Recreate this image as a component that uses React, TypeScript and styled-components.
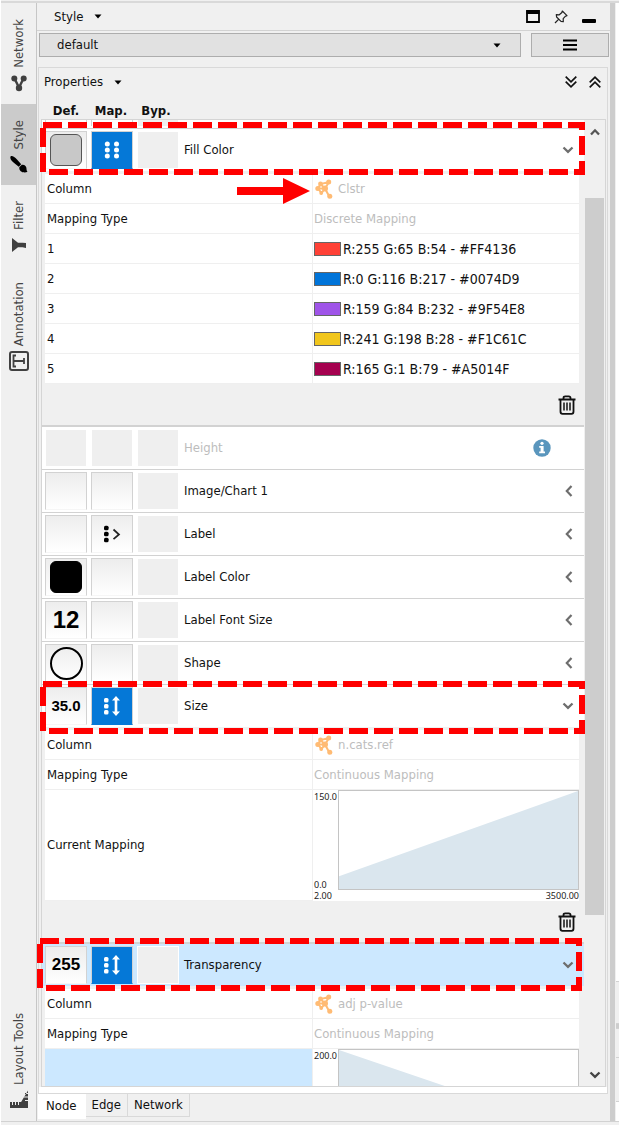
import React from "react";
import styled, { createGlobalStyle, css } from "styled-components";

const FONT = '"DejaVu Sans Condensed", Tahoma, "Noto Sans", sans-serif';
const NUM_FONT = '"Liberation Sans", Arial, sans-serif';
const BG = "#f0f0f0";
const LINE = "#d2d2d2";
const BLUE = "#0578d7";
const PALE = "#cce8ff";

const GlobalStyle = createGlobalStyle`
  * { box-sizing: border-box; }
  body { margin: 0; background: ${BG}; color: #111; font: 13px/16px ${FONT}; }
  button, select { font: inherit; color: inherit; margin: 0; padding: 0; }
  svg { display: block; flex: none; }
`;

/* ---------- frame ---------- */

const Page = styled.div`
  height: 100vh;
  display: flex;
  flex-direction: column;
  padding: 1px 0 3px;
  border-left: 1px solid #fff;
`;

const Frame = styled.div`
  flex: 1;
  min-height: 0;
  display: flex;
  border-top: 2px solid #d9d9d9;
  border-bottom: 1px solid ${LINE};
`;

const Strip = styled.nav`
  width: 36px;
  display: flex;
  flex-direction: column;
  border-right: 1px solid #c6c6c6;
`;

const StripTab = styled.button<{ $active?: boolean; $last?: boolean }>`
  display: flex;
  flex-direction: column;
  align-items: center;
  gap: 5px;
  padding: 16px 0 11px;
  border: 0;
  background: ${(p) => (p.$active ? "#cbcbcb" : "transparent")};
  color: #444;
  ${(p) => p.$last && css`margin-top: auto;`}
`;

const StripLabel = styled.span`
  writing-mode: vertical-rl;
  transform: rotate(180deg);
`;

const Main = styled.main`
  flex: 1;
  min-width: 0;
  display: flex;
  flex-direction: column;
`;

const TitleBar = styled.header`
  height: 28px;
  display: flex;
  align-items: center;
  justify-content: space-between;
  padding: 0 14px 0 17px;
  border-bottom: 1px solid ${LINE};
`;

const MenuButton = styled.button`
  display: flex;
  align-items: center;
  gap: 11px;
  border: 0;
  background: none;
`;

const IconGroup = styled.div<{ $gap: number }>`
  display: flex;
  align-items: center;
  gap: ${(p) => p.$gap}px;
`;

const IconButton = styled.button`
  display: flex;
  align-items: center;
  justify-content: center;
  border: 0;
  background: none;
`;

const StyleBar = styled.div`
  display: flex;
  gap: 10px;
  padding: 2px 1px 0 2px;
`;

const SelectBox = styled.label`
  position: relative;
  flex: 1;
  display: flex;

  svg {
    position: absolute;
    right: 20px;
    top: 10px;
    pointer-events: none;
  }
`;

const Select = styled.select`
  appearance: none;
  width: 100%;
  height: 24px;
  padding: 0 17px;
  border: 1px solid #adadad;
  border-radius: 0;
  background: #e1e1e1;
`;

const OptionsButton = styled(IconButton)`
  width: 78px;
  height: 24px;
  border: 1px solid #adadad;
  background: #e1e1e1;
`;

const Panel = styled.section`
  flex: 1;
  min-height: 0;
  display: flex;
  flex-direction: column;
  margin: 10px 2px 0 1px;
  border: 1px solid #d9d9d9;
`;

const PanelBar = styled.div`
  height: 28px;
  display: flex;
  align-items: center;
  justify-content: space-between;
  padding: 0 6px 0 5px;
`;

const Headings = styled.div`
  height: 23px;
  display: flex;
  align-items: center;
  gap: 3px;
  padding: 7px 0 0 6px;
  font-weight: bold;

  span { width: 42px; text-align: center; }
`;

const ListFrame = styled.div`
  flex: 1;
  min-height: 0;
  display: flex;
  margin: 0 1px 0 2px;
  border: 1px solid #d5d5d5;
`;

const List = styled.div`
  flex: 1;
  min-width: 0;
  padding-right: 1px;
  overflow-x: visible;
  overflow-y: clip;
`;

const ScrollBar = styled.div`
  width: 20px;
  display: flex;
  flex-direction: column;
  padding-right: 1px;
`;

const ScrollTrack = styled.div`
  flex: 1;
  display: grid;
  grid-template-rows: 55fr 717fr 148fr;
`;

const ScrollThumb = styled.div`
  grid-row: 2;
  background: #cdcdcd;
`;

const ScrollButton = styled(IconButton)`
  height: 23px;
`;

const PanelFoot = styled.div`
  height: 6px;
  background: #fff;
`;

const BottomTabs = styled.div`
  height: 27px;
  display: flex;
  align-items: flex-start;
  margin-left: 1px;
`;

const BottomTab = styled.button<{ $active?: boolean }>`
  height: ${(p) => (p.$active ? 25 : 23)}px;
  padding: 0 ${(p) => (p.$active ? 8 : 6)}px;
  border: 1px solid ${(p) => (p.$active ? "#fff" : "#d9d9d9")};
  border-top: 0;
  border-left: 0;
  background: ${(p) => (p.$active ? "#fff" : BG)};
`;

const Gutter = styled.div`
  width: 5px;
  background: #cdcdcd;
`;

const Neighbour = styled.div`
  width: 4px;
  display: flex;
  flex-direction: column;
  background: #fff;
  border-left: 1px solid ${BG};
`;

const NeighbourBar = styled.div<{ $h: number; $bg: string }>`
  height: ${(p) => p.$h}px;
  background: ${(p) => p.$bg};
  border-top: 1px solid ${LINE};
`;

const NeighbourFill = styled.div`
  flex: 1;
`;

/* ---------- property rows ---------- */

const Row = styled.div<{ $selected?: boolean; $thick?: boolean }>`
  position: relative;
  display: flex;
  align-items: center;
  gap: 4px;
  height: ${(p) => (p.$thick ? 44 : 43)}px;
  padding: 0 10px 0 3px;
  border-top: ${(p) => (p.$thick ? 2 : 1)}px solid ${LINE};
  background: ${(p) => (p.$selected ? PALE : "#fff")};
`;

const RowTail = styled.div`
  height: 8px;
  display: flex;
  gap: 4px;
  padding: 0 3px 2px;
  background: #fff;
`;

const cell = css`
  width: 42px;
  height: 38px;
  display: flex;
  align-items: center;
  justify-content: center;
`;

const ValueButton = styled.button<{ $size?: number }>`
  ${cell}
  border: 1px solid ${LINE};
  border-bottom-color: #f6f6f6;
  background: linear-gradient(#ededed, #fff);
  font: bold ${(p) => p.$size ?? 16}px/20px ${NUM_FONT};
  color: #000;

  &:disabled { background: #efefef; border-color: #fff; }
`;

const MapButton = styled(ValueButton)<{ $on?: boolean }>`
  ${(p) => p.$on && css`background: ${BLUE}; border-bottom-color: ${BLUE};`}
`;

const BypassButton = styled.button`
  ${cell}
  border: 1px solid #fff;
  background: #efefef;
`;

const TailCell = styled.div<{ $plain?: boolean }>`
  width: 42px;
  border: solid ${(p) => (p.$plain ? "#fff" : LINE)};
  border-width: 0 1px;
  background: ${(p) => (p.$plain ? "#efefef" : "#fff")};
`;

const RowName = styled.span<{ $muted?: boolean }>`
  flex: 1;
  padding-left: 1px;
  color: ${(p) => (p.$muted ? "#bdbdbd" : "inherit")};
`;

const InfoSlot = styled.span`
  margin-right: 23px;
`;

const Swatch = styled.span<{ $color: string; $edge: string }>`
  width: 32px;
  height: 32px;
  border: 1px solid ${(p) => p.$edge};
  border-radius: 6px;
  background: ${(p) => p.$color};
`;

const Circle = styled.span`
  width: 33px;
  height: 33px;
  flex: none;
  border: 2px solid #000;
  border-radius: 50%;
`;

const Highlight = styled.svg<{ $top: number; $left: number; $right: number }>`
  position: absolute;
  z-index: 3;
  top: ${(p) => p.$top}px;
  left: ${(p) => p.$left}px;
  width: calc(100% - ${(p) => p.$left + p.$right}px);
  height: 53px;
  overflow: visible;
  pointer-events: none;
`;

/* ---------- mapping details ---------- */

const Details = styled.div`
  padding: 3px 5px 0 3px;
  background: ${BG};
`;

const Table = styled.table`
  width: 100%;
  table-layout: fixed;
  border-spacing: 0;
  background: #fff;

  th, td {
    height: 30px;
    padding: 0 1px;
    border-bottom: 1px solid #efefef;
    font-weight: normal;
    text-align: left;
  }
  th { position: relative; padding-left: 2px; }
  td { border-left: 1px solid #efefef; }
`;

const ChartHead = styled.th<{ $selected?: boolean }>`
  background: ${(p) => (p.$selected ? PALE : "#fff")};
`;

const ChartCell = styled.td`
  && { padding: 0; border-bottom: 0; }
`;

const Muted = styled.span`
  display: flex;
  align-items: center;
  gap: 4px;
  color: #bdbdbd;
`;

const ColorValue = styled.span`
  display: flex;
  align-items: center;
  gap: 2px;
  font-size: 14px;
`;

const ColorChip = styled.span<{ $color: string }>`
  width: 27px;
  height: 14px;
  border: 1px solid #666;
  background: ${(p) => p.$color};
`;

const DeleteBar = styled.div`
  height: 41px;
  display: flex;
  align-items: center;
  justify-content: flex-end;
  padding-right: 3px;
`;

const Arrow = styled.svg`
  position: absolute;
  z-index: 3;
  right: 1px;
  top: 4px;
`;

const ChartGrid = styled.div`
  height: 111px;
  display: grid;
  grid-template-columns: 25px 1fr;
  grid-template-rows: 100px 11px;
  font: 9px/11px "Noto Sans", sans-serif;
  color: #222;
`;

const AxisY = styled.div`
  display: flex;
  flex-direction: column;
  justify-content: space-between;
  padding: 1px 0 0 1px;
`;

const AxisX = styled.div`
  grid-column: 1 / 3;
  display: flex;
  justify-content: space-between;
  padding-left: 1px;
`;

const Plot = styled.svg`
  width: 100%;
  height: 100px;
  border: 1px solid #c4c4c4;
`;

/* ---------- icons ---------- */

const Caret = () => (
  <svg width="8" height="5" viewBox="0 0 8 5"><path d="M0.5 0.5h7L4 4.5z" fill="#000" /></svg>
);

const ChevronDown = ({ color = "#6e6e6e" }: { color?: string }) => (
  <svg width="12" height="8" viewBox="0 0 12 8"><path d="M1.5 1.5 6 5.8l4.500-4.300" fill="none" stroke={color} strokeWidth="2.300" /></svg>
);

const ChevronUp = () => (
  <svg width="12" height="8" viewBox="0 0 12 8"><path d="M2 6.500 6 2.300 10 6.500" fill="none" stroke="#555" strokeWidth="2.300" /></svg>
);

const ChevronLeft = () => (
  <svg width="10" height="12" viewBox="0 0 10 12"><path d="M7.500 1 2.800 6l4.700 5" fill="none" stroke="#6e6e6e" strokeWidth="2.200" /></svg>
);

const DoubleChevron = ({ up }: { up?: boolean }) => (
  <svg width="12" height="12" viewBox="0 0 12 12" fill="none" stroke="#111" strokeWidth="1.700">
    {up ? <path d="M.7 6.300 6 1.200l5.300 5.100M.7 11.300 6 6.200l5.300 5.100" /> : <path d="M.7.700 6 5.800 11.300.700M.7 5.700 6 10.800l5.300-5.100" />}
  </svg>
);

const MaximizeIcon = () => (
  <svg width="14" height="13" viewBox="0 0 14 13"><path d="M1 1h12v11H1z" fill="none" stroke="#000" strokeWidth="1.800" /><path d="M.5.500h13v3.500H.5z" fill="#000" /></svg>
);

const PinIcon = () => (
  <svg width="14" height="14" viewBox="0 0 14 14" fill="none" stroke="#222" strokeWidth="1.200" strokeLinejoin="round">
    <path d="M8.300 1 13 5.600l-1.500.6-2.300 2.500.1 3L7 11.400 2.600 7 2.300 4.700l3 .1L7.900 2.500z" />
    <path d="M4.800 9.200 1 13" />
  </svg>
);

const MinimizeIcon = () => (
  <svg width="14" height="14" viewBox="0 0 14 14"><rect x="0" y="9" width="14" height="4" rx="1" fill="#000" /></svg>
);

const MenuIcon = () => (
  <svg width="14" height="12" viewBox="0 0 14 12" stroke="#000" strokeWidth="2"><path d="M0 1.500h14M0 6h14M0 10.500h14" /></svg>
);

const NetworkIcon = () => (
  <svg width="20" height="20" viewBox="0 0 20 20" fill="#404040">
    <path d="M5.500 5.500 10 14.500l4.500-9" fill="none" stroke="#404040" strokeWidth="2.400" />
    <circle cx="5.300" cy="5.500" r="3" /><circle cx="14.700" cy="5.500" r="3" /><circle cx="10" cy="15" r="3.200" />
  </svg>
);

const BrushIcon = () => (
  <svg width="20" height="20" viewBox="0 0 20 20">
    <path d="M1.500 2.500C3 1.300 5.500 3 8 5.500l4.200 4.800-2.400 2.400C6 9.700.200 6 1.500 2.500z" />
    <path d="M10.300 13.200l2.500-2.500c3-.400 4.800 1.800 4.700 4 0 1.600.5 2.500 1 3-2.500 1.500-8.700.8-8.200-4.500z" />
  </svg>
);

const FilterIcon = () => (
  <svg width="20" height="20" viewBox="0 0 20 20"><path d="M3 3v14l6-4.800h4.500L17 13V8l-3.500-.2H9z" fill="#404040" /></svg>
);

const AnnotationIcon = () => (
  <svg width="20" height="20" viewBox="0 0 20 20" fill="none" stroke="#404040" strokeWidth="2">
    <rect x="1" y="1" width="18" height="18" rx="2" />
    <path d="M4.500 10H15M7 4.500H4.500v11H7M15 7v6" strokeWidth="1.800" />
  </svg>
);

const RulerIcon = () => (
  <svg width="20" height="20" viewBox="0 0 20 20" fill="#404040">
    <path d="M1 12h2v3h1v-3h2v3h1v-3h2v3h1v-3h2v6H1z" />
    <path d="M11.500 13 19 .5V3h-3v1h3v2.500h-4v1h4V10h-3v1h3v7h-7.500z" />
  </svg>
);

const InfoIcon = () => (
  <svg width="18" height="18" viewBox="0 0 18 18">
    <circle cx="9" cy="9" r="8.700" fill="#5a96bd" />
    <circle cx="9" cy="4.300" r="1.600" fill="#fff" />
    <path d="M6.200 7h4.400v5.500h1.400v1.800H6.200v-1.800h1.400V8.800H6.200z" fill="#fff" />
  </svg>
);

const TrashIcon = () => (
  <svg width="18" height="20" viewBox="0 0 18 20" fill="none" stroke="#111" strokeWidth="1.800">
    <path d="M.5 4.500h17M5.500 4.500V3q0-1.700 1.700-1.700h3.600Q12.500 1.300 12.500 3v1.500M2.500 4.500v12q0 2.300 2 2.300h9q2 0 2-2.300v-12" />
    <path d="M6 7.500v8M9 7.500v8M12 7.500v8" strokeWidth="1.500" />
  </svg>
);

const ColumnIcon = () => (
  <svg width="20" height="20" viewBox="0 0 20 20" fill="#ffbb74" stroke="#ffbb74">
    <path d="M4 9.500 11 9.500l4-6.500-8.500 2zM11 9.500l4 7.500M11 9.500l-3.500 4.500L4 9.500M6.500 5 11 9.500" fill="none" strokeWidth="2" />
    <g stroke="none">
      <circle cx="3.800" cy="9.500" r="2.500" /><circle cx="6.500" cy="5" r="2.400" /><circle cx="14.700" cy="3" r="2.500" />
      <circle cx="11" cy="9.500" r="3" /><circle cx="7.200" cy="14" r="1.900" /><circle cx="15.800" cy="17.300" r="2.500" />
    </g>
  </svg>
);

const DiscreteIcon = () => (
  <svg width="16" height="18" viewBox="0 0 16 18" fill="#fff">
    {[3, 9, 15].map((y) => (
      <React.Fragment key={y}><circle cx="3.300" cy={y} r="2.500" /><circle cx="12.500" cy={y} r="2.500" /></React.Fragment>
    ))}
  </svg>
);

const ContinuousIcon = () => (
  <svg width="18" height="22" viewBox="0 0 18 22" fill="#fff">
    {[5, 11, 17].map((y) => <rect key={y} x="1" y={y - 2} width="4.500" height="4.500" rx="1.500" />)}
    <path d="M13 1l4 4.500h-2.700v11H17L13 21l-4-4.500h2.700v-11H9z" />
  </svg>
);

const PassthroughIcon = () => (
  <svg width="18" height="18" viewBox="0 0 18 18">
    {[3, 9, 15].map((y) => <rect key={y} x="1" y={y - 2.3} width="4.600" height="4.600" rx="1.600" />)}
    <path d="M10.500 4.500 16 9.500l-5.500 4.700" fill="none" stroke="#222" strokeWidth="1.700" />
  </svg>
);

/* ---------- composed parts ---------- */

type Box = { top: number; left: number; right: number };

const DashedBox = ({ top, left, right }: Box) => (
  <Highlight $top={top} $left={left} $right={right} aria-hidden="true">
    <rect x="3" y="3" height="47" fill="none" stroke="#f00" strokeWidth="6" strokeDasharray="19 6" style={{ width: "calc(100% - 6px)" }} />
  </Highlight>
);

type PropertyProps = {
  name: string;
  def?: React.ReactNode;
  size?: number;
  map?: React.ReactNode;
  mapped?: boolean;
  open?: boolean;
  disabled?: boolean;
  selected?: boolean;
  thick?: boolean;
  box?: Box;
};

const Property = ({ name, def, size, map, mapped, open, disabled, selected, thick, box }: PropertyProps) => (
  <Row $selected={selected} $thick={thick}>
    <ValueButton $size={size} disabled={disabled} aria-label={`${name} default`}>{def}</ValueButton>
    <MapButton $on={mapped} disabled={disabled} aria-label={`${name} mapping`}>{map}</MapButton>
    <BypassButton disabled aria-label={`${name} bypass`} />
    <RowName $muted={disabled}>{name}</RowName>
    {disabled ? (
      <InfoSlot><InfoIcon /></InfoSlot>
    ) : (
      <IconButton aria-label={`Toggle ${name}`} aria-expanded={!!open}>{open ? <ChevronDown /> : <ChevronLeft />}</IconButton>
    )}
    {box && <DashedBox {...box} />}
  </Row>
);

const MappingRows = ({ column, type, arrow }: { column: string; type: string; arrow?: boolean }) => (
  <>
    <tr>
      <th scope="row">
        Column
        {arrow && (
          <Arrow width="74" height="26" viewBox="0 0 74 26" aria-hidden="true"><path d="M0 9h46V0l27 13-27 13v-9H0z" fill="#f00" /></Arrow>
        )}
      </th>
      <td><Muted><ColumnIcon />{column}</Muted></td>
    </tr>
    <tr>
      <th scope="row">Mapping Type</th>
      <td><Muted>{type}</Muted></td>
    </tr>
  </>
);

type ChartProps = { points: string; max: string; min?: string; from?: string; to?: string; selected?: boolean };

const ChartRow = ({ points, max, min, from, to, selected }: ChartProps) => (
  <tr>
    <ChartHead scope="row" $selected={selected}>{!selected && "Current Mapping"}</ChartHead>
    <ChartCell>
      <ChartGrid>
        <AxisY><span>{max}</span>{min && <span>{min}</span>}</AxisY>
        <Plot viewBox="0 0 100 100" preserveAspectRatio="none"><polygon points={points} fill="#dae6ee" /></Plot>
        {from && <AxisX><span>{from}</span><span>{to}</span></AxisX>}
      </ChartGrid>
    </ChartCell>
  </tr>
);

const CLUSTERS = [
  ["#FF4136", "R:255 G:65 B:54 - #FF4136"],
  ["#0074D9", "R:0 G:116 B:217 - #0074D9"],
  ["#9F54E8", "R:159 G:84 B:232 - #9F54E8"],
  ["#F1C61C", "R:241 G:198 B:28 - #F1C61C"],
  ["#A5014F", "R:165 G:1 B:79 - #A5014F"],
];

const Remove = () => (
  <DeleteBar><IconButton aria-label="Remove mapping"><TrashIcon /></IconButton></DeleteBar>
);

export default function App() {
  return (
    <Page>
      <GlobalStyle />
      <Frame>
        <Strip>
          <StripTab><StripLabel>Network</StripLabel><NetworkIcon /></StripTab>
          <StripTab $active><StripLabel>Style</StripLabel><BrushIcon /></StripTab>
          <StripTab><StripLabel>Filter</StripLabel><FilterIcon /></StripTab>
          <StripTab><StripLabel>Annotation</StripLabel><AnnotationIcon /></StripTab>
          <StripTab $last><StripLabel>Layout Tools</StripLabel><RulerIcon /></StripTab>
        </Strip>
        <Main>
          <TitleBar>
            <MenuButton>Style <Caret /></MenuButton>
            <IconGroup $gap={14}>
              <IconButton aria-label="Maximize"><MaximizeIcon /></IconButton>
              <IconButton aria-label="Pin"><PinIcon /></IconButton>
              <IconButton aria-label="Minimize"><MinimizeIcon /></IconButton>
            </IconGroup>
          </TitleBar>
          <StyleBar>
            <SelectBox>
              <Select aria-label="Current style" defaultValue="default"><option>default</option></Select>
              <Caret />
            </SelectBox>
            <OptionsButton aria-label="Options"><MenuIcon /></OptionsButton>
          </StyleBar>
          <Panel>
            <PanelBar>
              <MenuButton>Properties <Caret /></MenuButton>
              <IconGroup $gap={12}>
                <IconButton aria-label="Expand all"><DoubleChevron /></IconButton>
                <IconButton aria-label="Collapse all"><DoubleChevron up /></IconButton>
              </IconGroup>
            </PanelBar>
            <Headings><span>Def.</span><span>Map.</span><span>Byp.</span></Headings>
            <ListFrame>
              <List>
                <RowTail><TailCell /><TailCell /><TailCell $plain /></RowTail>
                <Property name="Fill Color" def={<Swatch $color="#c8c8c8" $edge="#555" />} map={<DiscreteIcon />} mapped open box={{ top: -7, left: -2, right: -1 }} />
                <Details>
                  <Table>
                    <tbody>
                      <MappingRows column="Clstr" type="Discrete Mapping" arrow />
                      {CLUSTERS.map(([color, text], i) => (
                        <tr key={color}>
                          <th scope="row">{i + 1}</th>
                          <td><ColorValue><ColorChip $color={color} />{text}</ColorValue></td>
                        </tr>
                      ))}
                    </tbody>
                  </Table>
                  <Remove />
                </Details>
                <Property name="Height" disabled thick />
                <Property name="Image/Chart 1" />
                <Property name="Label" map={<PassthroughIcon />} />
                <Property name="Label Color" def={<Swatch $color="#000" $edge="#000" />} />
                <Property name="Label Font Size" def="12" size={24} />
                <Property name="Shape" def={<Circle />} />
                <Property name="Size" def="35.0" size={15} map={<ContinuousIcon />} mapped open box={{ top: -4, left: -2, right: -1 }} />
                <Details>
                  <Table>
                    <tbody>
                      <MappingRows column="n.cats.ref" type="Continuous Mapping" />
                      <ChartRow points="0,87 100,0 100,100 0,100" max="150.0" min="0.0" from="2.00" to="3500.00" />
                    </tbody>
                  </Table>
                  <Remove />
                </Details>
                <Property name="Transparency" def="255" size={17} map={<ContinuousIcon />} mapped open selected thick box={{ top: -6, left: -5, right: 2 }} />
                <Details>
                  <Table>
                    <tbody>
                      <MappingRows column="adj p-value" type="Continuous Mapping" />
                      <ChartRow points="0,0 100,83 100,100 0,100" max="200.0" selected />
                    </tbody>
                  </Table>
                </Details>
              </List>
              <ScrollBar>
                <ScrollButton aria-label="Scroll up"><ChevronUp /></ScrollButton>
                <ScrollTrack><ScrollThumb /></ScrollTrack>
                <ScrollButton aria-label="Scroll down"><ChevronDown color="#444" /></ScrollButton>
              </ScrollBar>
            </ListFrame>
            <PanelFoot />
          </Panel>
          <BottomTabs>
            <BottomTab $active>Node</BottomTab>
            <BottomTab>Edge</BottomTab>
            <BottomTab>Network</BottomTab>
          </BottomTabs>
        </Main>
        <Gutter />
        <Neighbour>
          <NeighbourFill />
          <NeighbourBar $h={42} $bg={BG} />
          <NeighbourBar $h={5} $bg="#cdcdcd" />
          <NeighbourBar $h={29} $bg={BG} />
          <NeighbourBar $h={44} $bg={BG} />
          <NeighbourBar $h={20} $bg="#fff" />
        </Neighbour>
      </Frame>
    </Page>
  );
}
